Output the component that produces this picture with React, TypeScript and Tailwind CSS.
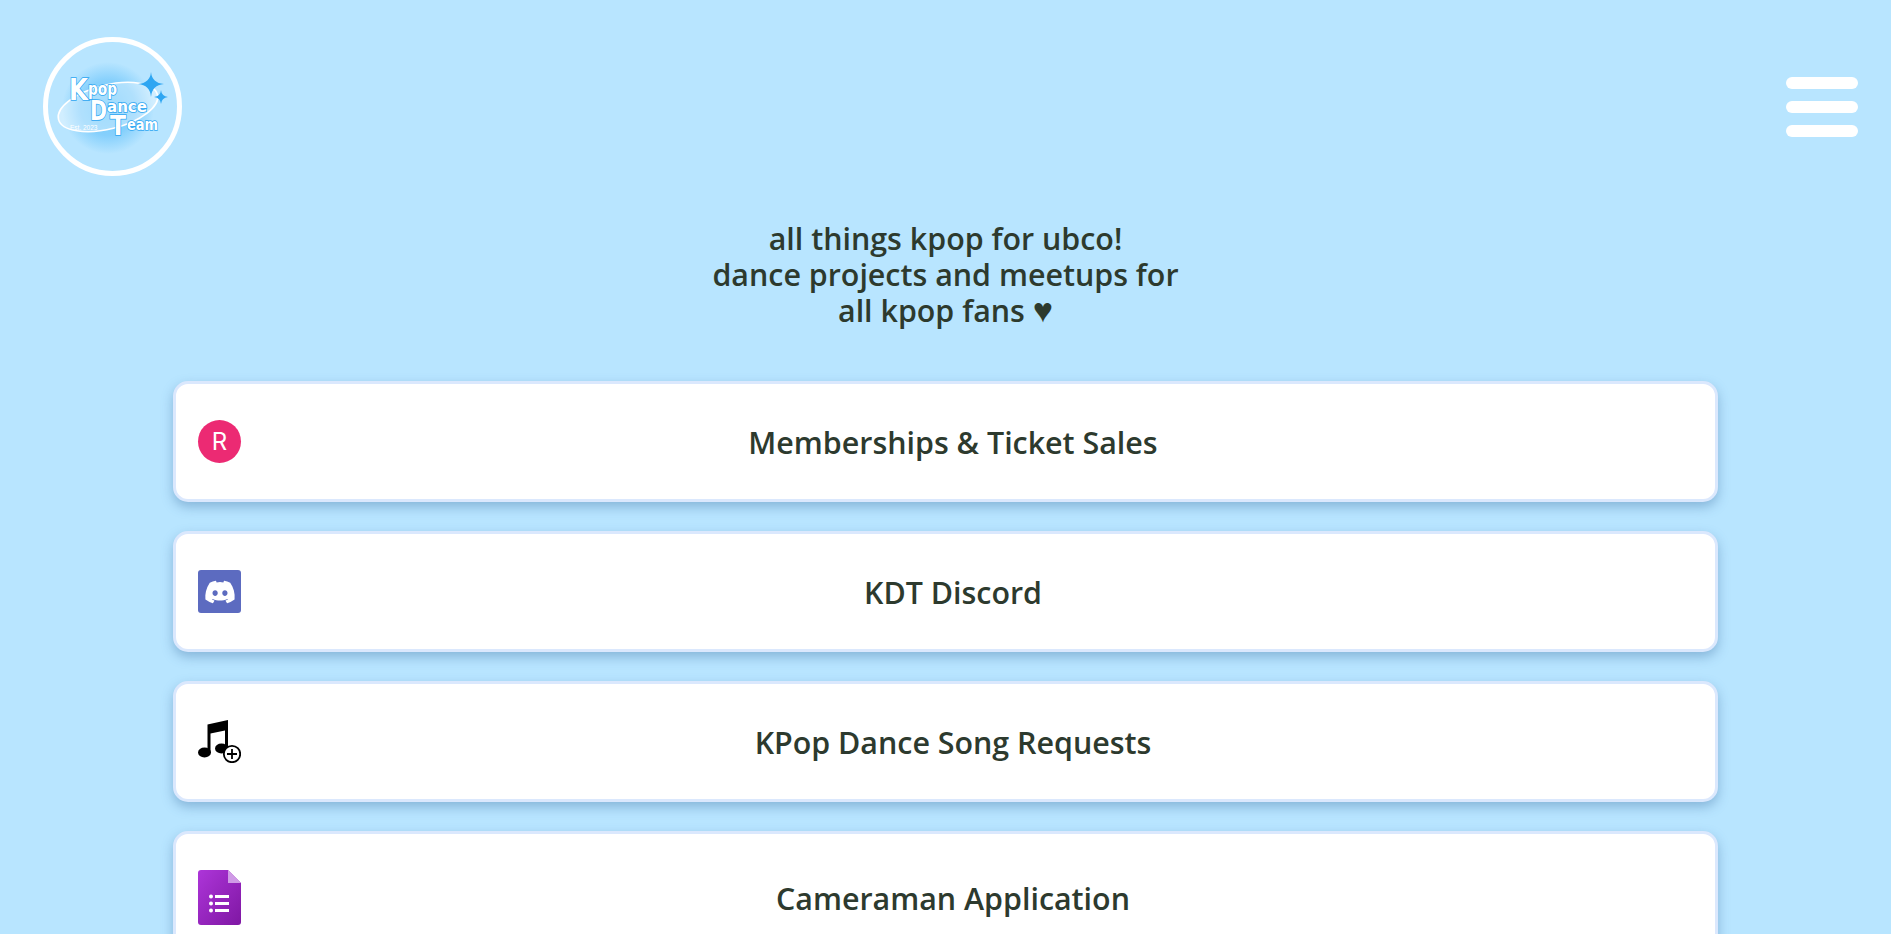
import { FaDiscord } from 'react-icons/fa6';

/* ─── icons ─────────────────────────────────────────────────── */
function Logo() {
  return (
    <div className="flex h-[139px] w-[139px] items-center justify-center rounded-full border-[5px] border-white bg-[#b8e5ff]">
      <svg width="129" height="129" viewBox="0 0 129 129">
        <defs>
          <radialGradient id="logoGlow" cx="50%" cy="50%" r="50%">
            <stop offset="0%" stopColor="#6cc8fc" />
            <stop offset="60%" stopColor="#86d0fc" />
            <stop offset="100%" stopColor="#b8e5ff" />
          </radialGradient>
        </defs>
        <circle cx="60" cy="66" r="46" fill="url(#logoGlow)" />
        <ellipse
          cx="60"
          cy="65"
          rx="51"
          ry="22"
          transform="rotate(-14 60 65)"
          fill="#ffffff"
          fillOpacity="0.35"
          stroke="#ffffff"
          strokeWidth="1.6"
        />
        <g
          fontFamily="'DejaVu Sans', sans-serif"
          fontWeight="700"
          fill="#ffffff"
          stroke="#2ea6f2"
          strokeWidth="1.6"
          paintOrder="stroke"
        >
          <text x="21" y="58" fontSize="30" textLength="19" lengthAdjust="spacingAndGlyphs">K</text>
          <text x="40" y="53" fontSize="17" textLength="29" lengthAdjust="spacingAndGlyphs">pop</text>
          <text x="42" y="78" fontSize="27" textLength="17" lengthAdjust="spacingAndGlyphs">D</text>
          <text x="59" y="70" fontSize="16" textLength="40" lengthAdjust="spacingAndGlyphs">ance</text>
          <text x="62" y="93" fontSize="27" textLength="16" lengthAdjust="spacingAndGlyphs">T</text>
          <text x="79" y="88" fontSize="16" textLength="31" lengthAdjust="spacingAndGlyphs">eam</text>
        </g>
        <text x="22" y="88" fontFamily="'Liberation Sans', sans-serif" fontSize="6.5" fill="#ffffff">
          Est. 2023
        </text>
        <path d="M103 30 Q104 41 116 42 Q104 43 103 55 Q102 43 90 42 Q102 41 103 30Z" fill="#2ea6f2" />
        <path d="M113 48 Q113.500 54 120 55 Q113.500 56 113 62 Q112.500 56 106 55 Q112.500 54 113 48Z" fill="#2ea6f2" />
      </svg>
    </div>
  );
}

function MusicPlus() {
  return (
    <svg width="43" height="43" viewBox="0 0 43 43" className="block">
      <ellipse cx="6.500" cy="32.500" rx="6.500" ry="5" fill="#000" />
      <ellipse cx="23.500" cy="28.500" rx="6.500" ry="5" fill="#000" />
      <path d="M9.500 33V4.500L30 0v29h-3V10.500l-14.500 3V33z" fill="#000" />
      <circle cx="34" cy="34" r="8.200" fill="#fff" stroke="#000" strokeWidth="1.800" />
      <path d="M34 29v10M29 34h10" stroke="#000" strokeWidth="1.800" />
    </svg>
  );
}

function FormsIcon() {
  return (
    <svg width="43" height="55" viewBox="0 0 43 55" className="block">
      <defs>
        <linearGradient id="formsFill" x1="0" y1="0" x2="1" y2="1">
          <stop offset="0%" stopColor="#ad35d9" />
          <stop offset="100%" stopColor="#7f17a3" />
        </linearGradient>
      </defs>
      <path d="M3 0h27l13 13v39a3 3 0 0 1-3 3H3a3 3 0 0 1-3-3V3a3 3 0 0 1 3-3z" fill="url(#formsFill)" />
      <path d="M30 0l13 13H30z" fill="#cf9ae6" />
      <circle cx="13" cy="26.500" r="2" fill="#fff" />
      <circle cx="13" cy="33.500" r="2" fill="#fff" />
      <circle cx="13" cy="40.500" r="2" fill="#fff" />
      <path d="M17 25h14v3H17zM17 32h14v3H17zM17 39h14v3H17z" fill="#fff" />
    </svg>
  );
}

/* ─── data ─────────────────────────────────────────────────── */
const links = [
  {
    label: 'Memberships & Ticket Sales',
    icon: (
      <div className="flex h-[43px] w-[43px] items-center justify-center rounded-full bg-[#ec2a73] font-['Inter',sans-serif] text-[24px] text-white">
        R
      </div>
    ),
  },
  {
    label: 'KDT Discord',
    icon: (
      <div className="flex h-[43px] w-[43px] items-center justify-center rounded-[3px] bg-[#5c6bc0] text-white">
        <FaDiscord size={32} />
      </div>
    ),
  },
  { label: 'KPop Dance Song Requests', icon: <MusicPlus /> },
  { label: 'Cameraman Application', icon: <FormsIcon /> },
];

/* ─── page ──────────────────────────────────────────────────── */
export default function App() {
  return (
    <div className="h-[934px] overflow-hidden bg-[#b8e5ff] font-['Open_Sans',sans-serif] text-[#2d3a2e]">
      <header className="flex items-start justify-between pl-[43px] pr-[33px] pt-[37px]">
        <Logo />
        <button className="mt-[40px] flex w-[72px] flex-col gap-[12px]">
          <span className="h-[12px] rounded-full bg-white" />
          <span className="h-[12px] rounded-full bg-white" />
          <span className="h-[12px] rounded-full bg-white" />
        </button>
      </header>

      <p className="mt-[45px] text-center text-[30.4px] font-semibold leading-[36px]">
        all things kpop for ubco!
        <br />
        dance projects and meetups for
        <br />
        all kpop fans <span className="text-[34px] leading-[30px]">♥</span>
      </p>

      <main className="mx-[173px] mt-[52px] flex flex-col gap-[29px]">
        {links.map((link) => (
          <a
            key={link.label}
            className="flex items-center rounded-[15px] border-[3px] border-[#dbe8fd] bg-white py-[36px] pl-[22px] pr-[50px] shadow-[0_5px_12px_rgba(60,110,160,0.4)]"
          >
            {link.icon}
            <span className="flex-1 pt-[2px] text-center text-[30.4px] font-semibold leading-[36px]">
              {link.label}
            </span>
          </a>
        ))}
      </main>
    </div>
  );
}
